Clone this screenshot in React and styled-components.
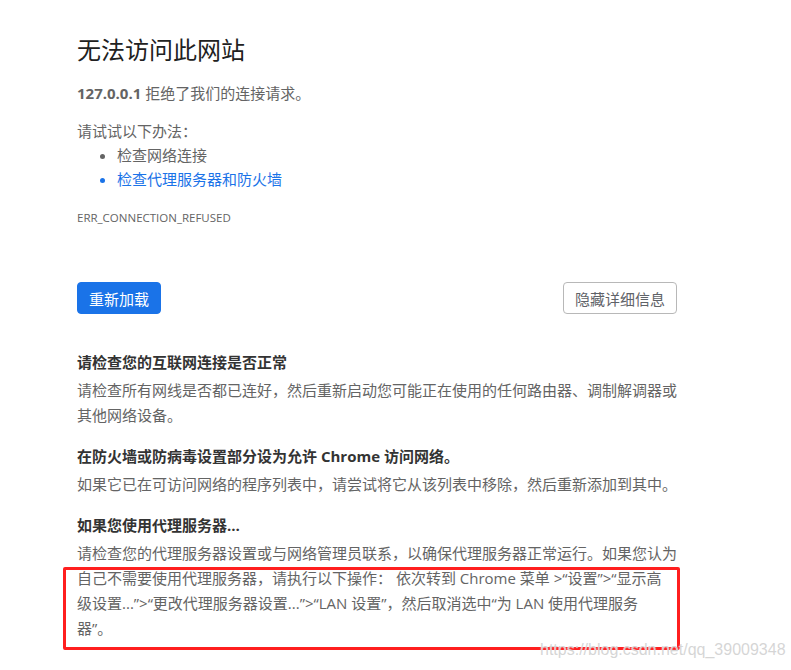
import styled, { createGlobalStyle } from "styled-components";

const GlobalStyle = createGlobalStyle`
    body {
        margin: 0;
        background: #fff;
        font-family: "Open Sans", "Noto Sans CJK SC", sans-serif;
    }
`;

const Page = styled.div`
    position: relative;
    width: 791px;
    height: 670px;
    overflow: hidden;
`;

const Main = styled.div`
    width: 600px;
    margin-left: 77px;
    padding-top: 35px;
    color: #646464;
    font-size: 15px;
`;

const Title = styled.h1`
    margin: 0;
    font-size: 24px;
    font-weight: 400;
    line-height: 30px;
    color: #212121;
`;

const Text = styled.p`
    margin: ${(p) => p.$top || 0}px 0 0;
    line-height: 24px;

    strong {
        font-weight: 700;
    }
`;

const List = styled.ul`
    margin: 0;
    padding-left: 40px;
    line-height: 24px;
`;

const Item = styled.li`
    color: ${(p) => (p.$link ? "#1a73e8" : "#646464")};
`;

const ErrorCode = styled.div`
    margin-top: 18px;
    font-size: 11.5px;
    line-height: 18px;
    text-transform: uppercase;
`;

const Buttons = styled.div`
    display: flex;
    justify-content: space-between;
    margin-top: 55px;
`;

const Button = styled.button`
    height: 32px;
    padding: 0 11px;
    border-radius: 4px;
    font-family: inherit;
    font-size: 15px;
    border: 1px solid ${(p) => (p.$primary ? "#1a73e8" : "#b8b8b8")};
    background: ${(p) => (p.$primary ? "#1a73e8" : "#fff")};
    color: ${(p) => (p.$primary ? "#fff" : "#5f6368")};
`;

const Details = styled.div`
    margin-top: 36px;
`;

const Section = styled.div`
    & + & {
        margin-top: 16px;
    }
`;

const Heading = styled.h3`
    margin: 0;
    font-size: 15px;
    font-weight: 700;
    line-height: 24px;
    color: #333;
`;

const Para = styled.p`
    margin: 4px 0 0;
    line-height: 25px;
`;

const Marker = styled.div`
    position: absolute;
    left: 63px;
    top: 567px;
    width: 617px;
    height: 83px;
    box-sizing: border-box;
    border: 3px solid #ff1f1f;
    border-radius: 2px;
`;

const Watermark = styled.div`
    position: absolute;
    left: 540px;
    top: 641px;
    font-family: "Liberation Sans", Arial, sans-serif;
    font-size: 16px;
    color: rgba(200, 200, 200, 0.75);
    text-shadow: 0 0 1px #fff;
`;

export default function App() {
    return (
        <Page>
            <GlobalStyle />
            <Main>
                <Title>无法访问此网站</Title>
                <Text $top={16}><strong>127.0.0.1</strong> 拒绝了我们的连接请求。</Text>
                <Text $top={14}>请试试以下办法：</Text>
                <List>
                    <Item>检查网络连接</Item>
                    <Item $link>检查代理服务器和防火墙</Item>
                </List>
                <ErrorCode>ERR_CONNECTION_REFUSED</ErrorCode>
                <Buttons>
                    <Button $primary>重新加载</Button>
                    <Button>隐藏详细信息</Button>
                </Buttons>
                <Details>
                    <Section>
                        <Heading>请检查您的互联网连接是否正常</Heading>
                        <Para>请检查所有网线是否都已连好，然后重新启动您可能正在使用的任何路由器、调制解调器或其他网络设备。</Para>
                    </Section>
                    <Section>
                        <Heading>在防火墙或防病毒设置部分设为允许 Chrome 访问网络。</Heading>
                        <Para>如果它已在可访问网络的程序列表中，请尝试将它从该列表中移除，然后重新添加到其中。</Para>
                    </Section>
                    <Section>
                        <Heading>如果您使用代理服务器…</Heading>
                        <Para>
                            请检查您的代理服务器设置或与网络管理员联系，以确保代理服务器正常运行。如果您认为自己不需要使用代理服务器，请执行以下操作： 依次转到 Chrome 菜单 &gt;“设置”&gt;“显示高<br />
                            级设置...”&gt;“更改代理服务器设置...”&gt;“LAN 设置”，然后取消选中“为 LAN 使用代理服务<br />
                            器”。
                        </Para>
                    </Section>
                </Details>
            </Main>
            <Marker />
            <Watermark>https://blog.csdn.net/qq_39009348</Watermark>
        </Page>
    );
}
